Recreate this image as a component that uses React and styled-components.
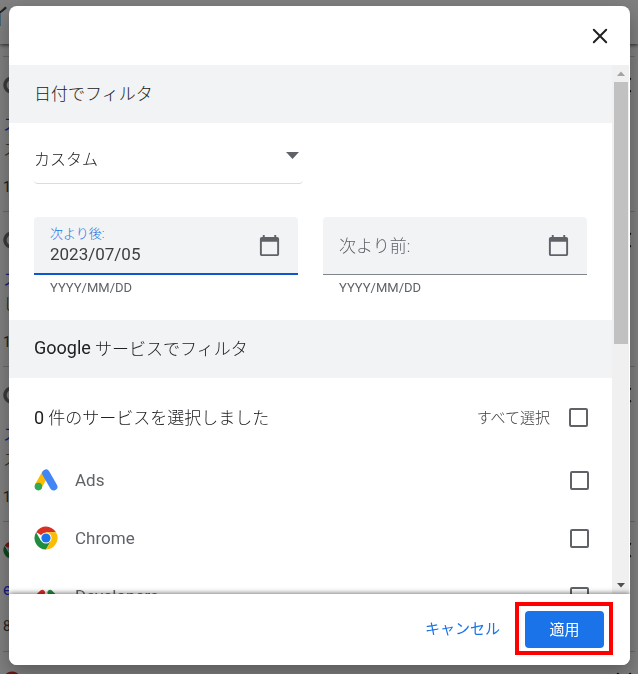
import React, { useState } from "react";
import styled, { createGlobalStyle } from "styled-components";

const services = [
  { id: "ads", name: "Ads" },
  { id: "chrome", name: "Chrome" },
  { id: "developers", name: "Developers" },
];

const history = [
  { icon: "google", title: "ス", text: "ス", time: "1" },
  { icon: "google", title: "ス", text: "し", time: "1" },
  { icon: "google", title: "ス", text: "ス", time: "1" },
  { icon: "chrome", title: "e", time: "8" },
  { icon: "chrome", name: "Chrome" },
];

//icons
const AdsIcon = () => (
  <svg width="24" height="24" viewBox="0 0 24 24" aria-hidden="true">
    <path
      d="M4.2 18.4 11.4 5.6"
      stroke="#fbbc04"
      strokeWidth="7.4"
      fill="none"
    />
    <path
      d="M12 5.3 19.6 18.6"
      stroke="#4285f4"
      strokeWidth="7.6"
      strokeLinecap="round"
      fill="none"
    />
    <circle cx="4.4" cy="18.6" r="3.8" fill="#34a853" />
  </svg>
);

const ChromeIcon = ({ size = 24 }) => (
  <svg width={size} height={size} viewBox="0 0 24 24" aria-hidden="true">
    <path
      d="M12 12 2.2 6.2A11.5 11.5 0 0 1 22 6.3H12z"
      fill="#d93025"
    />
    <path
      d="M2.1 6.2A11.5 11.5 0 0 0 12 23.5l5-8.6-5-2.9-4.9 2.9z"
      fill="#1e8e3e"
    />
    <path
      d="M22 6.3A11.5 11.5 0 0 1 11.9 23.5l5-8.7L12 12V6.3z"
      fill="#fbbc04"
    />
    <circle cx="12" cy="12" r="5.6" fill="#fff" />
    <circle cx="12" cy="12" r="4.6" fill="#1a73e8" />
  </svg>
);

const DevelopersIcon = () => (
  <svg width="24" height="24" viewBox="0 0 24 24" aria-hidden="true">
    <path
      d="M8.3 8.500 3.500 13"
      stroke="#d93025"
      strokeWidth="5.4"
      strokeLinecap="round"
    />
    <path
      d="m3.500 13 5 5"
      stroke="#4285f4"
      strokeWidth="5.4"
      strokeLinecap="round"
    />
    <path
      d="m16.2 8.500 4.300 4.500"
      stroke="#1e8e3e"
      strokeWidth="5.4"
      strokeLinecap="round"
    />
    <path
      d="m20.500 13-5 5"
      stroke="#fbbc04"
      strokeWidth="5.4"
      strokeLinecap="round"
    />
  </svg>
);

const GoogleIcon = () => (
  <svg width="18" height="18" viewBox="0 0 18 18" aria-hidden="true">
    <path
      d="M14 4.2A7 7 0 1 0 16 9H9.5"
      stroke="#777"
      strokeWidth="3.4"
      fill="none"
    />
  </svg>
);

const CalendarIcon = () => (
  <svg width="23" height="23" viewBox="0 0 24 24" aria-hidden="true">
    <path
      d="M20 3h-1V1h-2v2H7V1H5v2H4c-1.1 0-2 .9-2 2v16c0 1.1.9 2 2 2h16c1.1 0 2-.9 2-2V5c0-1.1-.9-2-2-2zm0 18H4V8h16v13z"
      fill="#5f6368"
    />
  </svg>
);

const CloseIcon = ({ size = 16 }) => (
  <svg width={size} height={size} viewBox="0 0 16 16" aria-hidden="true">
    <path
      d="M1.8 1.8 14.2 14.2M14.2 1.8 1.8 14.2"
      stroke="#202124"
      strokeWidth="2"
      strokeLinecap="round"
    />
  </svg>
);

//styles
const GlobalStyle = createGlobalStyle`
  *, *::before, *::after {
    box-sizing: border-box;
  }
  html, body, #root {
    height: 100%;
  }
  body {
    margin: 0;
    overflow: hidden;
    color: #3c4043;
    background: #fff;
    font-family: Roboto, "Noto Sans CJK JP", sans-serif;
    font-size: 16px;
    font-weight: 300;
  }
  button, input, select {
    font: inherit;
    color: inherit;
  }
`;

const Page = styled.div`
  height: 100vh;
  overflow: hidden;
`;

const PageHeader = styled.header`
  height: 44px;
  display: flex;
  align-items: center;
  padding-bottom: 16px;
  font-size: 24px;
  font-weight: 400;
  box-shadow: 0 1px 4px rgba(0, 0, 0, 0.7);
  span {
    margin-left: -14px;
  }
`;

const History = styled.ul`
  list-style: none;
  margin: 12px 3px 0;
  padding: 0;
`;

const HistoryItem = styled.li`
  display: flex;
  flex-direction: column;
  border-top: 1px solid #d0d0d0;
  height: ${({ $short }) => ($short ? "130px" : "155px")};
`;

const HistoryTop = styled.div`
  display: flex;
  align-items: center;
  gap: 14px;
  height: 56px;
  padding-right: 3px;
  font-weight: 400;
  svg:last-child {
    margin-left: auto;
  }
`;

const HistoryLink = styled.a`
  line-height: 24px;
  color: #2a3cff;
  font-weight: 400;
  text-decoration: none;
`;

const HistoryText = styled.span`
  line-height: 26px;
`;

const HistoryTime = styled.span`
  margin-top: 12px;
  font-size: 14px;
  font-weight: 400;
  line-height: 24px;
`;

const Scrim = styled.div`
  position: fixed;
  inset: 0;
  display: flex;
  padding: 6px 8px 9px 9px;
  background: rgba(0, 0, 0, 0.5);
`;

const Dialog = styled.section`
  flex: 1;
  display: flex;
  flex-direction: column;
  min-width: 0;
  overflow: hidden;
  background: #fff;
  border-radius: 8px;
  box-shadow: 0 8px 20px rgba(0, 0, 0, 0.3);
`;

const DialogHeader = styled.header`
  display: flex;
  flex: none;
  align-items: center;
  justify-content: flex-end;
  height: 59px;
  padding: 0 18px;
`;

const IconButton = styled.button`
  display: flex;
  align-items: center;
  justify-content: center;
  width: 24px;
  height: 24px;
  padding: 0;
  border: 0;
  background: none;
  cursor: pointer;
`;

const DialogBody = styled.div`
  display: flex;
  flex: 1;
  min-height: 0;
`;

const Content = styled.div`
  flex: 1;
  min-width: 0;
  overflow-y: auto;
  scrollbar-width: none;
`;

const SectionTitle = styled.h2`
  display: flex;
  align-items: center;
  height: 58px;
  margin: 0;
  padding: 0 25px 4px;
  background: #f1f3f4;
  color: #202124;
  font-size: 17px;
  font-weight: 300;
  white-space: pre;
`;

const Latin = styled.span`
  font-size: 18px;
  font-weight: 400;
`;

const DateSection = styled.div`
  display: flex;
  flex-direction: column;
  gap: 33px;
  height: 197px;
  padding: 13px 25px 0;
`;

const SelectBox = styled.div`
  display: grid;
  align-items: center;
  width: 269px;
  border-bottom: 1px solid #dadce0;
  border-radius: 4px;
  select,
  svg {
    grid-area: 1 / 1;
  }
  svg {
    justify-self: end;
    margin: 0 4px 8px 0;
    pointer-events: none;
  }
`;

const Select = styled.select`
  appearance: none;
  height: 47px;
  padding: 0;
  border: 0;
  background: none;
  color: #202124;
`;

const Fields = styled.div`
  display: grid;
  grid-template-columns: 1fr 1fr;
  gap: 25px;
`;

const FieldBox = styled.div`
  display: flex;
  align-items: center;
  height: 58px;
  padding: 0 17px 0 16px;
  background: #f1f3f4;
  border-radius: 4px 4px 0 0;
  border-bottom: ${({ $active }) =>
    $active ? "2px solid #0b57d0" : "1px solid #80868b"};
`;

const FieldText = styled.div`
  display: grid;
  flex: 1;
  min-width: 0;
  align-items: center;
  label {
    color: ${({ $active }) => ($active ? "#1a73e8" : "#5f6368")};
    font-size: ${({ $active }) => ($active ? "13px" : "17px")};
    line-height: ${({ $active }) => ($active ? "18px" : "24px")};
    ${({ $active }) => !$active && "grid-area: 1 / 1;"}
  }
  input {
    min-width: 0;
    padding: 0;
    border: 0;
    outline: 0;
    background: none;
    color: #3c4043;
    font-size: 17px;
    font-weight: 400;
    line-height: 22px;
    ${({ $active }) => !$active && "grid-area: 1 / 1;"}
  }
`;

const Hint = styled.p`
  margin: 4px 16px 0;
  color: #5f6368;
  font-size: 13px;
  font-weight: 400;
  line-height: 18px;
`;

const SelectionRow = styled.div`
  display: flex;
  align-items: center;
  justify-content: space-between;
  height: 73px;
  padding: 6px 24px 0 25px;
  color: #202124;
  font-size: 17px;
  line-height: 24px;
  label {
    display: flex;
    align-items: center;
    gap: 19px;
    color: #3c4043;
    font-size: 15px;
  }
`;

const ServiceRow = styled.label`
  display: flex;
  align-items: center;
  gap: 17px;
  height: 58px;
  padding: 0 23px 0 25px;
  color: #5f6368;
  font-size: 17px;
  font-weight: 400;
  cursor: pointer;
  input {
    margin-left: auto;
  }
`;

const Checkbox = styled.input.attrs({ type: "checkbox" })`
  appearance: none;
  width: 19px;
  height: 19px;
  margin: 0;
  border: 2px solid #5f6368;
  border-radius: 2px;
  &:checked {
    background: #1a73e8;
    border-color: #1a73e8;
  }
`;

const ScrollBar = styled.div`
  display: flex;
  flex-direction: column;
  flex: none;
  width: 18px;
  background: #f0f0f0;
  border-right: 1px solid #fff;
  svg {
    flex: none;
    margin-left: 5px;
  }
`;

const ScrollTrack = styled.div`
  flex: 1;
  padding: 0 1px 0 2px;
`;

const ScrollThumb = styled.div`
  height: 53%;
  background: #c1c1c1;
`;

const DialogFooter = styled.footer`
  display: flex;
  flex: none;
  z-index: 1;
  align-items: center;
  justify-content: flex-end;
  gap: 15px;
  height: 71px;
  padding: 0 17px 2px;
  background: #fff;
  box-shadow: 0 -1px 5px rgba(0, 0, 0, 0.5);
`;

const TextButton = styled.button`
  padding: 0 0 2px;
  border: 0;
  background: none;
  color: #1a73e8;
  font-size: 15px;
  font-weight: 400;
  cursor: pointer;
`;

const Highlight = styled.div`
  padding: 5px 5px 3px 6px;
  border: 4px solid #f00;
`;

const PrimaryButton = styled.button`
  display: block;
  width: 79px;
  height: 37px;
  padding: 0 0 2px;
  border: 0;
  border-radius: 4px;
  background: #1a73e8;
  color: #fff;
  font-size: 15px;
  font-weight: 400;
  cursor: pointer;
`;

const serviceIcons = {
  ads: <AdsIcon />,
  chrome: <ChromeIcon />,
  developers: <DevelopersIcon />,
};

const DateField = ({ id, label, value, onChange, active }) => (
  <div>
    <FieldBox $active={active}>
      <FieldText $active={active}>
        <label htmlFor={id}>{label}</label>
        <input
          id={id}
          type="text"
          value={value}
          onChange={(e) => onChange(e.target.value)}
        />
      </FieldText>
      <IconButton type="button" aria-label="カレンダー">
        <CalendarIcon />
      </IconButton>
    </FieldBox>
    <Hint>YYYY/MM/DD</Hint>
  </div>
);

const HistoryPage = () => (
  <Page aria-hidden="true">
    <PageHeader>
      <span>イ</span>
    </PageHeader>
    <History>
      {history.map((item, i) => (
        <HistoryItem key={i} $short={!item.text}>
          <HistoryTop>
            {item.icon === "google" ? <GoogleIcon /> : <ChromeIcon size={18} />}
            {item.name && <span>{item.name}</span>}
            <CloseIcon />
          </HistoryTop>
          {item.title && <HistoryLink href="#">{item.title}</HistoryLink>}
          {item.text && <HistoryText>{item.text}</HistoryText>}
          {item.time && <HistoryTime>{item.time}</HistoryTime>}
        </HistoryItem>
      ))}
    </History>
  </Page>
);

const App = () => {
  const [after, setAfter] = useState("2023/07/05");
  const [before, setBefore] = useState("");
  const [selected, setSelected] = useState([]);

  const toggle = (id) =>
    setSelected((prev) =>
      prev.includes(id) ? prev.filter((x) => x !== id) : [...prev, id]
    );

  return (
    <>
      <GlobalStyle />
      <HistoryPage />
      <Scrim>
        <Dialog role="dialog" aria-modal="true">
          <DialogHeader>
            <IconButton type="button" aria-label="閉じる">
              <CloseIcon />
            </IconButton>
          </DialogHeader>
          <DialogBody>
            <Content>
              <SectionTitle>日付でフィルタ</SectionTitle>
              <DateSection>
                <SelectBox>
                  <Select aria-label="期間" defaultValue="custom">
                    <option value="custom">カスタム</option>
                    <option value="today">今日</option>
                  </Select>
                  <svg width="13" height="7" viewBox="0 0 13 7">
                    <path d="M0 0h13L6.500 7z" fill="#5f6368" />
                  </svg>
                </SelectBox>
                <Fields>
                  <DateField
                    id="after"
                    label="次より後:"
                    value={after}
                    onChange={setAfter}
                    active
                  />
                  <DateField
                    id="before"
                    label="次より前:"
                    value={before}
                    onChange={setBefore}
                  />
                </Fields>
              </DateSection>
              <SectionTitle>
                <Latin>Google</Latin> サービスでフィルタ
              </SectionTitle>
              <SelectionRow>
                <span>
                  <Latin>{selected.length}</Latin> 件のサービスを選択しました
                </span>
                <label>
                  すべて選択
                  <Checkbox
                    checked={selected.length === services.length}
                    onChange={(e) =>
                      setSelected(
                        e.target.checked ? services.map((s) => s.id) : []
                      )
                    }
                  />
                </label>
              </SelectionRow>
              {services.map(({ id, name }) => (
                <ServiceRow key={id}>
                  {serviceIcons[id]}
                  {name}
                  <Checkbox
                    checked={selected.includes(id)}
                    onChange={() => toggle(id)}
                  />
                </ServiceRow>
              ))}
            </Content>
            <ScrollBar aria-hidden="true">
              <svg width="8" height="17" viewBox="0 0 8 17">
                <path d="M0 11h8L4 6.500z" fill="#a3a3a3" />
              </svg>
              <ScrollTrack>
                <ScrollThumb />
              </ScrollTrack>
              <svg width="8" height="17" viewBox="0 0 8 17">
                <path d="M0 6h8l-4 4.500z" fill="#505050" />
              </svg>
            </ScrollBar>
          </DialogBody>
          <DialogFooter>
            <TextButton type="button">キャンセル</TextButton>
            <Highlight>
              <PrimaryButton type="button">適用</PrimaryButton>
            </Highlight>
          </DialogFooter>
        </Dialog>
      </Scrim>
    </>
  );
};

export default App;
